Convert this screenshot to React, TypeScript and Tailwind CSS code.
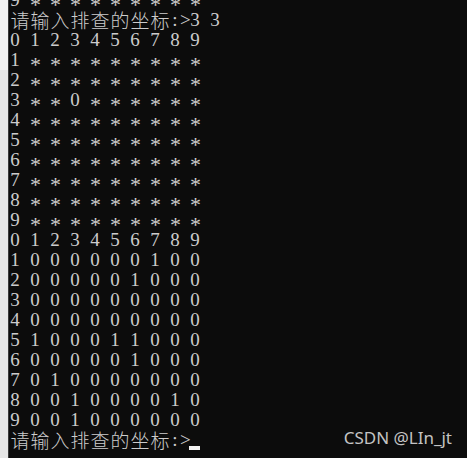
import React from "react";

const lines: string[] = [
  "9 * * * * * * * * *",
  "请输入排查的坐标:>3 3",
  "0 1 2 3 4 5 6 7 8 9",
  "1 * * * * * * * * *",
  "2 * * * * * * * * *",
  "3 * * 0 * * * * * *",
  "4 * * * * * * * * *",
  "5 * * * * * * * * *",
  "6 * * * * * * * * *",
  "7 * * * * * * * * *",
  "8 * * * * * * * * *",
  "9 * * * * * * * * *",
  "0 1 2 3 4 5 6 7 8 9",
  "1 0 0 0 0 0 0 1 0 0",
  "2 0 0 0 0 0 1 0 0 0",
  "3 0 0 0 0 0 0 0 0 0",
  "4 0 0 0 0 0 0 0 0 0",
  "5 1 0 0 0 1 1 0 0 0",
  "6 0 0 0 0 0 1 0 0 0",
  "7 0 1 0 0 0 0 0 0 0",
  "8 0 0 1 0 0 0 0 1 0",
  "9 0 0 1 0 0 0 0 0 0",
  "请输入排查的坐标:>",
];

function Cell({ ch }: { ch: string }) {
  const cjk = /[\u4e00-\u9fff]/.test(ch);
  if (cjk) {
    return (
      <span className="inline-block w-[20px] text-center text-[19px] leading-[20px] [font-family:'Noto_Sans_CJK_SC',sans-serif] font-light">
        {ch}
      </span>
    );
  }
  if (ch === "*") {
    return (
      <span className="inline-block w-[10px] h-[20px] overflow-visible text-center text-[22px] leading-[20px] [font-family:'Liberation_Serif',serif] translate-y-[5px]">
        *
      </span>
    );
  }
  return (
    <span className="inline-block w-[10px] text-center text-[19px] leading-[20px] [font-family:'Liberation_Serif',serif] whitespace-pre">
      {ch}
    </span>
  );
}

export default function App() {
  return (
    <div className="relative flex w-[467px] h-[458px] overflow-hidden bg-[#0c0c0c]">
      <div className="flex flex-col w-[9px] shrink-0 border-r border-[#3a3a3a]">
        <div className="h-[70px] bg-[#f3f3f3]" />
        <div className="flex-1 bg-[#e6e6e6]" />
      </div>
      <div className="flex-1 pl-[1px] text-[#cccccc]">
        <div className="-mt-[10px] flex flex-col">
          {lines.map((line, i) => (
            <div key={i} className="flex h-[20px] items-start">
              {Array.from(line).map((ch, j) => (
                <Cell key={j} ch={ch} />
              ))}
              {i === lines.length - 1 && (
                <span className="mt-[16px] ml-[-1px] inline-block h-[4px] w-[11px] bg-[#f2f2f2]" />
              )}
            </div>
          ))}
        </div>
      </div>
      <div className="absolute right-[15px] bottom-[10px] text-[17px] leading-[20px] text-[#c4c4c4] [font-family:'Noto_Sans',sans-serif]">
        CSDN @LIn_jt
      </div>
    </div>
  );
}
